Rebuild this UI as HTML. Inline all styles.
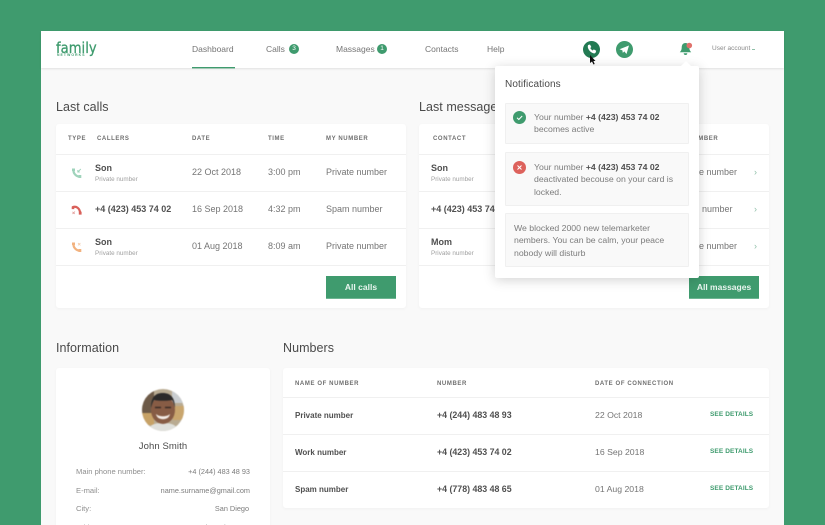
<!DOCTYPE html>
<html><head><meta charset="utf-8">
<style>
html,body{margin:0;padding:0;width:825px;height:525px;overflow:hidden}
#w{position:absolute;left:0;top:0;width:825px;height:525px;overflow:hidden;background:#3f9b6e;font-family:"Liberation Sans",sans-serif;color:#666}
#p{position:absolute;left:41px;top:31px;width:743px;height:494px;background:#f9f9f9}
.a,.t{position:absolute;white-space:nowrap}
.t{font-size:9px;line-height:12px;color:#757575}
.b{font-weight:bold;color:#505050}
.s{font-size:6.3px;color:#a0a0a0}
.h{font-size:6px;letter-spacing:.6px;font-weight:bold;color:#6f6f6f}
.n{font-size:8.5px;color:#757575}
.title{font-size:12.5px;line-height:16px;color:#4a4a4a;letter-spacing:.05px}
.card{position:absolute;background:#fff;border-radius:3px;box-shadow:0 1px 3px rgba(0,0,0,.04)}
.l{position:absolute;height:1px;background:#f0f0f0}
.btn{position:absolute;background:#3f9b6e;color:#e9f5ef;font-size:8.5px;font-weight:bold;text-align:center;line-height:22px;height:22px;border-bottom:1px solid #6db592}
.badge{position:absolute;width:10px;height:10px;border-radius:50%;background:#3f9b6e;color:#fff;font-size:6.5px;line-height:10px;text-align:center}
.item{position:absolute;left:10px;width:182px;background:#f9f9f9;border:1px solid #f0f0f0;border-radius:1px}
.it{font-size:8.7px;line-height:12.4px;color:#7c7c7c}
.it b{color:#505050}
.gr{font-size:6.5px;font-weight:bold;color:#3f9b6e;letter-spacing:.1px}
.k{font-size:7.6px;color:#8f8f8f}
.v{font-size:7.3px;color:#7c7c7c}
</style></head><body>
<div id="w">
<div id="p"></div>

<!-- header -->
<div class="a" style="left:41px;top:31px;width:743px;height:37px;background:#fff;box-shadow:0 1px 2px rgba(0,0,0,.1)"></div>
<div class="a" style="left:56px;top:38px;font-size:15.5px;line-height:20px;color:#3f9b6e;font-family:'DejaVu Sans',sans-serif;transform:scaleX(.85);transform-origin:left;-webkit-text-stroke:.3px #3f9b6e">family</div>
<div class="a" style="left:57px;top:53px;font-size:3.4px;line-height:5px;letter-spacing:1.1px;color:#3f9b6e;font-weight:bold">NETWORKS</div>
<div class="t n" style="left:192px;top:43px">Dashboard</div>
<div class="a" style="left:192px;top:67px;width:43px;height:1px;background:#3f9b6e"></div>
<div class="a" style="left:192px;top:68px;width:43px;height:1px;background:rgba(63,155,110,.4)"></div>
<div class="t n" style="left:266px;top:43px">Calls</div><div class="badge" style="left:289px;top:44px">3</div>
<div class="t n" style="left:336px;top:43px">Massages</div><div class="badge" style="left:377px;top:44px">1</div>
<div class="t n" style="left:425px;top:43px">Contacts</div>
<div class="t n" style="left:487px;top:43px">Help</div>
<svg class="a" style="left:583px;top:41px" width="17" height="17" viewBox="0 0 18 18"><circle cx="9" cy="9" r="9" fill="#237a53"/><path d="M5.500 4.300l1.900-.6 1.400 2.700-1.100 1c.5 1.100 1.400 2 2.600 2.600l1.100-1.100 2.600 1.400-.6 1.900c-.3.800-1.200 1.100-2 .9-3.200-.9-5.600-3.300-6.300-6.500-.1-1 .1-1.900.4-2.300z" fill="#fff"/></svg>
<svg class="a" style="left:616px;top:41px" width="17" height="17" viewBox="0 0 17 17"><circle cx="8.500" cy="8.500" r="8.500" fill="#3f9b6e"/><path d="M3.500 8.300L13 4.500l-2.500 8.500-2.200-2.600-1.500 1.500-.4-2.500z" fill="#fff"/></svg>
<svg class="a" style="left:678px;top:42px" width="16" height="15" viewBox="0 0 16 15"><path d="M7.500 1c2.800 0 3.800 2.200 3.800 4.800 0 2 .9 3.400 1.900 4.400H1.800c1-1 1.900-2.400 1.900-4.400C3.700 3.200 4.700 1 7.500 1z" fill="#3f9b6e"/><path d="M5.700 11.200h3.600c0 1.100-.7 1.800-1.800 1.800s-1.800-.7-1.800-1.800z" fill="#3f9b6e"/><circle cx="11.300" cy="3.500" r="2.800" fill="#e0716b"/></svg>
<div class="a" style="left:712px;top:43px;font-size:6.5px;line-height:12px;color:#8a8a8a">User account</div>
<div class="a" style="left:752px;top:49px;width:3px;height:1px;background:#8fc0a8"></div>

<!-- Last calls -->
<div class="a title" style="left:56px;top:99px">Last calls</div>
<div class="card" style="left:56px;top:124px;width:350px;height:184px"></div>
<div class="t h" style="left:68px;top:133px">TYPE</div>
<div class="t h" style="left:97px;top:133px">CALLERS</div>
<div class="t h" style="left:192px;top:133px">DATE</div>
<div class="t h" style="left:268px;top:133px">TIME</div>
<div class="t h" style="left:326px;top:133px">MY NUMBER</div>
<div class="l" style="left:56px;top:154px;width:350px"></div>
<div class="l" style="left:56px;top:191px;width:350px"></div>
<div class="l" style="left:56px;top:228px;width:350px"></div>
<div class="l" style="left:56px;top:265px;width:350px"></div>

<svg class="a" style="left:71px;top:168px" width="11" height="11" viewBox="0 0 11 11"><path d="M2.400 1.500C2.200 5.500 5 8.800 9.500 8.800" fill="none" stroke="#9fd3bb" stroke-width="2.200"/><path d="M1 .5h3v2.500H1zM7.500 7h2.800v3H7.500z" fill="#9fd3bb"/><path d="M9.800 1L6.800 4M6.800 2v2h2" stroke="#9fd3bb" fill="none" stroke-width=".9"/></svg>
<svg class="a" style="left:71px;top:205px" width="11" height="10" viewBox="0 0 11 10"><path d="M1.500 2.300C5 .6 9 3 9.200 8.500" fill="none" stroke="#d9605a" stroke-width="2.200"/><path d="M.7 1.500h2.600v2.600H.7zM7.800 6.600h2.800v3H7.800z" fill="#d9605a"/><path d="M1.500 9l2.500-2.500M1.500 6.800l2.200 2.200" stroke="#e29a96" stroke-width=".8"/></svg>
<svg class="a" style="left:71px;top:242px" width="11" height="11" viewBox="0 0 11 11"><path d="M2.400 1.500C2.200 5.500 5 8.800 9.500 8.800" fill="none" stroke="#f2b27f" stroke-width="2.200"/><path d="M1 .5h3v2.500H1zM7.500 7h2.800v3H7.500z" fill="#f2b27f"/><path d="M7 1l2.400 2.400M9.400 1L7 3.400" stroke="#f3c9a8" stroke-width=".8"/></svg>

<div class="t b" style="left:95px;top:162px">Son</div><div class="t s" style="left:95px;top:174px">Private number</div>
<div class="t" style="left:192px;top:166px">22 Oct 2018</div><div class="t" style="left:268px;top:166px">3:00 pm</div><div class="t" style="left:326px;top:166px">Private number</div>
<div class="t b" style="left:95px;top:203px">+4 (423) 453 74 02</div>
<div class="t" style="left:192px;top:203px">16 Sep 2018</div><div class="t" style="left:268px;top:203px">4:32 pm</div><div class="t" style="left:326px;top:203px">Spam number</div>
<div class="t b" style="left:95px;top:236px">Son</div><div class="t s" style="left:95px;top:248px">Private number</div>
<div class="t" style="left:192px;top:240px">01 Aug 2018</div><div class="t" style="left:268px;top:240px">8:09 am</div><div class="t" style="left:326px;top:240px">Private number</div>
<div class="btn" style="left:326px;top:276px;width:70px">All calls</div>

<!-- Last messages -->
<div class="a title" style="left:419px;top:99px">Last messages</div>
<div class="card" style="left:419px;top:124px;width:350px;height:184px"></div>
<div class="t h" style="left:433px;top:133px">CONTACT</div>
<div class="t h" style="left:676px;top:133px">MY NUMBER</div>
<div class="l" style="left:419px;top:154px;width:350px"></div>
<div class="l" style="left:419px;top:191px;width:350px"></div>
<div class="l" style="left:419px;top:228px;width:350px"></div>
<div class="l" style="left:419px;top:265px;width:350px"></div>
<div class="t b" style="left:431px;top:162px">Son</div><div class="t s" style="left:431px;top:174px">Private number</div>
<div class="t b" style="left:431px;top:203px">+4 (423) 453 74 02</div>
<div class="t b" style="left:431px;top:236px">Mom</div><div class="t s" style="left:431px;top:248px">Private number</div>
<div class="t" style="left:676px;top:166px">Private number</div>
<div class="t" style="left:676px;top:203px">Spam number</div>
<div class="t" style="left:676px;top:240px">Private number</div>
<div class="t" style="left:754px;top:166px;color:#8fbfa8;font-size:9px">›</div>
<div class="t" style="left:754px;top:203px;color:#8fbfa8;font-size:9px">›</div>
<div class="t" style="left:754px;top:240px;color:#8fbfa8;font-size:9px">›</div>
<div class="btn" style="left:689px;top:276px;width:70px">All massages</div>

<!-- Popup -->
<div class="a" style="left:495px;top:66px;width:204px;height:212px;background:#fff;border-radius:2px;box-shadow:0 2px 12px rgba(0,0,0,.18)">
  <div class="a" style="left:185px;top:-5px;width:0;height:0;border-left:6px solid transparent;border-right:6px solid transparent;border-bottom:6px solid #fff"></div>
  <div class="a" style="left:10px;top:12px;font-size:10px;line-height:14px;color:#4a4a4a;letter-spacing:.1px">Notifications</div>
  <div class="item" style="top:37px;height:39px">
    <svg class="a" style="left:7px;top:7px" width="13" height="13" viewBox="0 0 13 13"><circle cx="6.500" cy="6.500" r="6.500" fill="#3f9b6e"/><path d="M4 6.800l1.800 1.700L9.200 5" stroke="#fff" fill="none"/></svg>
    <div class="a it" style="left:28px;top:6.500px;line-height:12.600px">Your number <b>+4 (423) 453 74 02</b><br>becomes active</div>
  </div>
  <div class="item" style="top:86px;height:52px">
    <svg class="a" style="left:7px;top:8px" width="13" height="13" viewBox="0 0 13 13"><circle cx="6.500" cy="6.500" r="6.500" fill="#dd625c"/><path d="M4.500 4.500l4 4M8.500 4.500l-4 4" stroke="#fff"/></svg>
    <div class="a it" style="left:28px;top:8px">Your number <b>+4 (423) 453 74 02</b><br>deactivated becouse on your card is<br>locked.</div>
  </div>
  <div class="item" style="top:147px;height:52px">
    <div class="a it" style="left:8px;top:8px">We blocked 2000 new telemarketer<br>nembers. You can be calm, your peace<br>nobody will disturb</div>
  </div>
</div>

<!-- Cursor -->
<svg class="a" style="left:589px;top:55px" width="7" height="10" viewBox="0 0 7 10"><path d="M1 0v8l2-1.500L4.500 9.500l1.200-.5-1.300-3H6.500z" fill="#111"/></svg>

<!-- Information -->
<div class="a title" style="left:56px;top:340px">Information</div>
<div class="card" style="left:56px;top:368px;width:214px;height:157px;border-radius:3px 3px 0 0"></div>
<svg class="a" style="left:142px;top:389px;filter:blur(.5px)" width="42" height="42" viewBox="0 0 42 42">
<defs><clipPath id="c"><circle cx="21" cy="21" r="21"/></clipPath></defs>
<g clip-path="url(#c)"><rect width="42" height="42" fill="#b9ab92"/><rect width="12" height="24" fill="#6d5a48"/><rect x="30" width="12" height="14" fill="#c9cdd0"/><rect x="31" y="17" width="11" height="14" fill="#c9a66e"/><rect y="24" width="12" height="12" fill="#c7a267"/><path d="M6 42c1-6 6-8 15-8s14 2 15 8z" fill="#dfe0dc"/><ellipse cx="21" cy="21" rx="12" ry="14" fill="#875c45"/><path d="M9 19C9 7 14 4 21 4s12 4 12 15c-1-4-2-7-3-8-5 1-13 1-18 0-1 1-2 4-3 8z" fill="#2c2a2a"/><path d="M14 25c3 3 11 3 14 0-1 7-13 7-14 0z" fill="#f4ece6"/><path d="M13 18.500h6M23 18.500h6" stroke="#3a2c26" stroke-width="1.500"/></g></svg>
<div class="a" style="left:56px;top:440px;width:214px;text-align:center;font-size:9.500px;line-height:14px;color:#4a4a4a;letter-spacing:.1px">John Smith</div>
<div class="t k" style="left:76px;top:466px">Main phone number:</div>
<div class="t v" style="right:575px;top:466px">+4 (244) 483 48 93</div>
<div class="t k" style="left:76px;top:485px">E-mail:</div>
<div class="t v" style="right:575px;top:485px">name.surname@gmail.com</div>
<div class="t k" style="left:76px;top:503px">City:</div>
<div class="t v" style="right:576px;top:503px">San Diego</div>
<div class="t k" style="left:76px;top:522px">Address:</div>
<div class="t v" style="right:575px;top:522px">Sunset Boulevard 24, CA</div>

<!-- Numbers -->
<div class="a title" style="left:283px;top:340px">Numbers</div>
<div class="card" style="left:283px;top:368px;width:486px;height:140px"></div>
<div class="t h" style="left:295px;top:378px">NAME OF NUMBER</div>
<div class="t h" style="left:437px;top:378px">NUMBER</div>
<div class="t h" style="left:595px;top:378px">DATE OF CONNECTION</div>
<div class="l" style="left:283px;top:397px;width:486px"></div>
<div class="l" style="left:283px;top:434px;width:486px"></div>
<div class="l" style="left:283px;top:471px;width:486px"></div>
<div class="t b" style="left:295px;top:410px;font-size:8px">Private number</div><div class="t b" style="left:437px;top:409px;font-size:8.800px">+4 (244) 483 48 93</div><div class="t" style="left:595px;top:409px;font-size:8.700px">22 Oct 2018</div><div class="t gr" style="left:710px;top:409px">SEE DETAILS</div>
<div class="t b" style="left:295px;top:447px;font-size:8px">Work number</div><div class="t b" style="left:437px;top:446px;font-size:8.800px">+4 (423) 453 74 02</div><div class="t" style="left:595px;top:446px;font-size:8.700px">16 Sep 2018</div><div class="t gr" style="left:710px;top:446px">SEE DETAILS</div>
<div class="t b" style="left:295px;top:484px;font-size:8px">Spam number</div><div class="t b" style="left:437px;top:483px;font-size:8.800px">+4 (778) 483 48 65</div><div class="t" style="left:595px;top:483px;font-size:8.700px">01 Aug 2018</div><div class="t gr" style="left:710px;top:483px">SEE DETAILS</div>
</div>
</body></html>
